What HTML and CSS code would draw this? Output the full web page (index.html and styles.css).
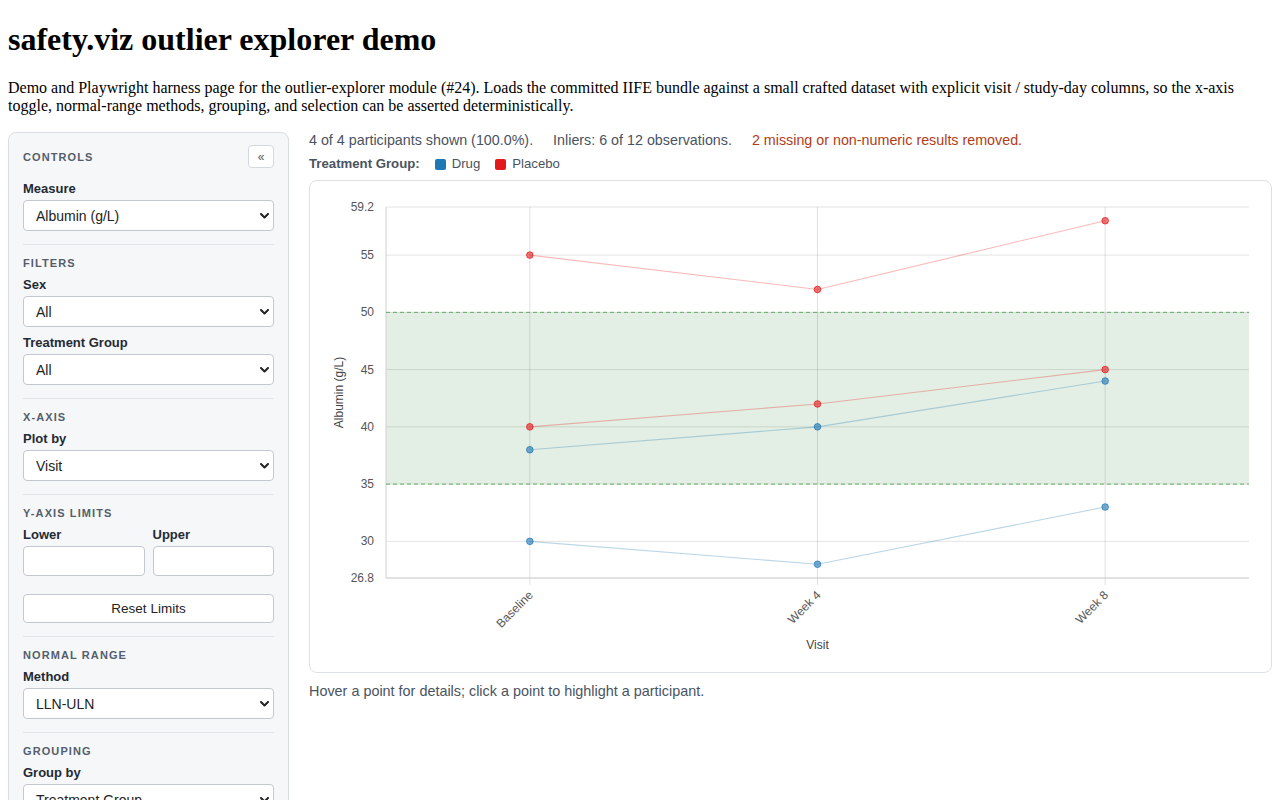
FILE: index.html
```html
<!DOCTYPE html>
<html lang="en">
<head>
    <meta charset="UTF-8">
    <meta name="viewport" content="width=device-width, initial-scale=1.0">
    <title>safety.viz outlier explorer demo</title>
    <link rel="stylesheet" href="styles.css">
</head>
<body>
    <h1>safety.viz outlier explorer demo</h1>
    <p>Demo and Playwright harness page for the outlier-explorer module (#24). Loads the committed IIFE bundle against a small crafted dataset with explicit visit / study-day columns, so the x-axis toggle, normal-range methods, grouping, and selection can be asserted deterministically.</p>

    <div class="app">
        <aside class="controls">
            <div class="section">
                <div class="controls-header">
                    <span class="section-title">Controls</span>
                    <button class="collapse-button" type="button">&laquo;</button>
                </div>
                <label class="field-label" for="measure">Measure</label>
                <div class="select-wrap">
                    <select id="measure">
                        <option>Albumin (g/L)</option>
                        <option>ALT (U/L)</option>
                    </select>
                    <svg class="chevron" width="9" height="6" viewBox="0 0 9 6"><path d="M1 1 L4.5 4.5 L8 1" fill="none" stroke="#222" stroke-width="2" stroke-linecap="round" stroke-linejoin="round"/></svg>
                </div>
            </div>

            <div class="section">
                <div class="section-title">Filters</div>
                <div class="field">
                    <label class="field-label" for="sex">Sex</label>
                    <div class="select-wrap">
                        <select id="sex"><option>All</option><option>F</option><option>M</option></select>
                        <svg class="chevron" width="9" height="6" viewBox="0 0 9 6"><path d="M1 1 L4.5 4.5 L8 1" fill="none" stroke="#222" stroke-width="2" stroke-linecap="round" stroke-linejoin="round"/></svg>
                    </div>
                </div>
                <div class="field">
                    <label class="field-label" for="arm">Treatment Group</label>
                    <div class="select-wrap">
                        <select id="arm"><option>All</option><option>Drug</option><option>Placebo</option></select>
                        <svg class="chevron" width="9" height="6" viewBox="0 0 9 6"><path d="M1 1 L4.5 4.5 L8 1" fill="none" stroke="#222" stroke-width="2" stroke-linecap="round" stroke-linejoin="round"/></svg>
                    </div>
                </div>
            </div>

            <div class="section">
                <div class="section-title">X-Axis</div>
                <label class="field-label" for="xaxis">Plot by</label>
                <div class="select-wrap">
                    <select id="xaxis"><option>Visit</option><option>Study Day</option></select>
                    <svg class="chevron" width="9" height="6" viewBox="0 0 9 6"><path d="M1 1 L4.5 4.5 L8 1" fill="none" stroke="#222" stroke-width="2" stroke-linecap="round" stroke-linejoin="round"/></svg>
                </div>
            </div>

            <div class="section">
                <div class="section-title">Y-Axis Limits</div>
                <div class="limits">
                    <div>
                        <label class="field-label" for="lower">Lower</label>
                        <input type="text" id="lower">
                    </div>
                    <div>
                        <label class="field-label" for="upper">Upper</label>
                        <input type="text" id="upper">
                    </div>
                </div>
                <button class="reset-button" type="button">Reset Limits</button>
            </div>

            <div class="section">
                <div class="section-title">Normal Range</div>
                <label class="field-label" for="method">Method</label>
                <div class="select-wrap">
                    <select id="method"><option>LLN-ULN</option><option>Standard Deviation</option><option>Quantiles</option></select>
                    <svg class="chevron" width="9" height="6" viewBox="0 0 9 6"><path d="M1 1 L4.5 4.5 L8 1" fill="none" stroke="#222" stroke-width="2" stroke-linecap="round" stroke-linejoin="round"/></svg>
                </div>
            </div>

            <div class="section last">
                <div class="section-title">Grouping</div>
                <label class="field-label" for="groupby">Group by</label>
                <div class="select-wrap">
                    <select id="groupby"><option>Treatment Group</option><option>Sex</option><option>None</option></select>
                    <svg class="chevron" width="9" height="6" viewBox="0 0 9 6"><path d="M1 1 L4.5 4.5 L8 1" fill="none" stroke="#222" stroke-width="2" stroke-linecap="round" stroke-linejoin="round"/></svg>
                </div>
            </div>
        </aside>

        <main class="main">
            <div class="summary">
                <span>4 of 4 participants shown (100.0%).</span>
                <span>Inliers: 6 of 12 observations.</span>
                <span class="warning">2 missing or non-numeric results removed.</span>
            </div>
            <div class="legend">
                <span class="legend-title">Treatment Group:</span>
                <span class="legend-item"><span class="swatch drug"></span>Drug</span>
                <span class="legend-item"><span class="swatch placebo"></span>Placebo</span>
            </div>
            <div class="chart-card">
                <svg id="chart" width="961" height="491"></svg>
            </div>
            <div class="hint">Hover a point for details; click a point to highlight a participant.</div>
        </main>
    </div>

    <script>
        const participants = [
            { id: 'P-01', group: 'Placebo', values: [55, 52, 58] },
            { id: 'P-02', group: 'Placebo', values: [40, 42, 45] },
            { id: 'D-01', group: 'Drug', values: [38, 40, 44] },
            { id: 'D-02', group: 'Drug', values: [30, 28, 33] }
        ];
        const visits = ['Baseline', 'Week 4', 'Week 8'];
        const colors = { Drug: '#1f77b4', Placebo: '#e31a1c' };

        const width = 961, height = 491;
        const margin = { top: 26, right: 22, bottom: 94, left: 76 };
        const yMin = 26.8, yMax = 59.2;
        const lln = 35, uln = 50;
        const plotW = width - margin.left - margin.right;
        const plotH = height - margin.top - margin.bottom;
        const bottom = margin.top + plotH;
        const right = margin.left + plotW;
        const step = plotW / visits.length;

        const x = i => margin.left + step * (i + 0.5);
        const y = v => margin.top + (yMax - v) / (yMax - yMin) * plotH;

        let svg = '';

        // normal range band
        svg += `<rect x="${margin.left}" y="${y(uln)}" width="${plotW}" height="${y(lln) - y(uln)}" fill="#3a8e3e" fill-opacity="0.14"/>`;

        // grid
        [yMax, 55, 50, 45, 40, 35, 30].forEach(v => {
            svg += `<line x1="${margin.left}" x2="${right}" y1="${y(v)}" y2="${y(v)}" stroke="#000" stroke-opacity="0.11"/>`;
        });
        visits.forEach((v, i) => {
            svg += `<line x1="${x(i)}" x2="${x(i)}" y1="${margin.top}" y2="${bottom + 7}" stroke="#000" stroke-opacity="0.12"/>`;
        });

        // axes
        svg += `<line x1="${margin.left}" x2="${margin.left}" y1="${margin.top}" y2="${bottom}" stroke="#d0d0d0"/>`;
        svg += `<line x1="${margin.left}" x2="${right}" y1="${bottom}" y2="${bottom}" stroke="#c4c4c4"/>`;

        // LLN / ULN
        [lln, uln].forEach(v => {
            svg += `<line x1="${margin.left}" x2="${right}" y1="${y(v)}" y2="${y(v)}" stroke="#4fa04f" stroke-opacity="0.85" stroke-dasharray="4 3"/>`;
        });

        // y ticks
        [yMax, 55, 50, 45, 40, 35, 30, yMin].forEach(v => {
            svg += `<text class="tick" x="${margin.left - 12}" y="${y(v)}" dy="0.34em" text-anchor="end">${v}</text>`;
        });

        // x ticks
        visits.forEach((v, i) => {
            svg += `<text class="tick" text-anchor="end" dy="0.34em" transform="translate(${x(i) + 1},${bottom + 15}) rotate(-45)">${v}</text>`;
        });

        svg += `<text class="axis-label" text-anchor="middle" x="${margin.left + plotW / 2}" y="${bottom + 71}">Visit</text>`;
        svg += `<text class="axis-label" text-anchor="middle" transform="translate(33,${margin.top + plotH / 2}) rotate(-90)">Albumin (g/L)</text>`;

        // participant lines and points
        participants.forEach(p => {
            const c = colors[p.group];
            const pts = p.values.map((v, i) => `${x(i)},${y(v)}`).join(' ');
            svg += `<polyline points="${pts}" fill="none" stroke="${c}" stroke-opacity="0.3" stroke-width="1.1"/>`;
        });
        participants.forEach(p => {
            const c = colors[p.group];
            p.values.forEach((v, i) => {
                svg += `<circle cx="${x(i)}" cy="${y(v)}" r="3.3" fill="${c}" fill-opacity="0.6" stroke="${c}" stroke-opacity="0.75"/>`;
            });
        });

        document.getElementById('chart').innerHTML = svg;
    </script>
</body>
</html>
```

FILE: styles.css
```css
body {
    margin: 0;
    padding: 8px;
    font-family: "Liberation Serif", "Times New Roman", serif;
    color: #000;
    background: #fff;
}
h1 {
    font-size: 32px;
    margin: 13px 0 21px;
}
p {
    font-size: 16px;
    line-height: 18px;
    margin: 0 0 17px;
}
.app {
    display: grid;
    grid-template-columns: 281px 1fr;
    gap: 20px;
    align-items: start;
    font-family: "Liberation Sans", Arial, Helvetica, sans-serif;
}

/* sidebar */
.controls {
    background: #f6f7f9;
    border: 1px solid #d9dde3;
    border-radius: 8px;
    padding: 12px 14px 14px;
}
.section {
    border-bottom: 1px solid #e1e5ea;
    padding-bottom: 13px;
    margin-bottom: 11px;
}
.section.last {
    border-bottom: none;
    margin-bottom: 0;
}
.controls-header {
    display: flex;
    justify-content: space-between;
    align-items: center;
    margin-bottom: 13px;
}
.section-title {
    font-size: 11px;
    line-height: 14px;
    font-weight: bold;
    letter-spacing: 0.1em;
    text-transform: uppercase;
    color: #545e6c;
    margin-bottom: 7px;
}
.controls-header .section-title {
    margin-bottom: 0;
}
.collapse-button {
    width: 26px;
    height: 23px;
    padding: 0;
    background: #fff;
    border: 1px solid #d4d9e0;
    border-radius: 4px;
    color: #555;
    font-size: 12px;
    font-family: inherit;
    cursor: pointer;
}
.field {
    margin-bottom: 8px;
}
.field:last-child {
    margin-bottom: 0;
}
.field-label {
    display: block;
    font-size: 13px;
    line-height: 16px;
    font-weight: bold;
    color: #242a33;
    margin-bottom: 3px;
}
.select-wrap {
    position: relative;
}
select {
    appearance: none;
    -webkit-appearance: none;
    width: 100%;
    height: 31px;
    padding: 0 26px 0 12px;
    background: #fff;
    border: 1px solid #c3c8d0;
    border-radius: 4px;
    font-family: inherit;
    font-size: 14px;
    color: #222;
    display: block;
}
.chevron {
    position: absolute;
    right: 5px;
    top: 13px;
    pointer-events: none;
}
.limits {
    display: grid;
    grid-template-columns: 1fr 1fr;
    gap: 8px;
}
input[type="text"] {
    box-sizing: border-box;
    width: 100%;
    height: 30px;
    background: #fff;
    border: 1px solid #c3c8d0;
    border-radius: 4px;
    display: block;
}
.reset-button {
    display: block;
    width: 100%;
    height: 29px;
    margin-top: 18px;
    background: #fff;
    border: 1px solid #c3c8d0;
    border-radius: 4px;
    font-family: inherit;
    font-size: 13.5px;
    color: #222;
    cursor: pointer;
}

/* main area */
.main {
    min-width: 0;
}
.summary {
    font-size: 14.3px;
    line-height: 17px;
    color: #4a5361;
    display: flex;
    gap: 20px;
}
.summary .warning {
    color: #b03c18;
}
.legend {
    display: flex;
    align-items: center;
    gap: 15px;
    margin-top: 7px;
    font-size: 13.2px;
    line-height: 16px;
    color: #4a5361;
}
.legend-title {
    font-weight: bold;
}
.legend-item {
    display: flex;
    align-items: center;
    gap: 6px;
}
.swatch {
    width: 11px;
    height: 11px;
    border-radius: 2px;
    display: inline-block;
}
.swatch.drug {
    background: #1f77b4;
}
.swatch.placebo {
    background: #e31a1c;
}
.chart-card {
    margin-top: 8px;
    background: #fff;
    border: 1px solid #dde1e6;
    border-radius: 8px;
}
#chart {
    display: block;
    font-family: "Liberation Sans", Arial, Helvetica, sans-serif;
}
#chart .tick {
    font-size: 12px;
    fill: #555;
}
#chart .axis-label {
    font-size: 12px;
    fill: #444;
}
.hint {
    margin-top: 10px;
    font-size: 14.4px;
    line-height: 16px;
    color: #4a5361;
}
```
